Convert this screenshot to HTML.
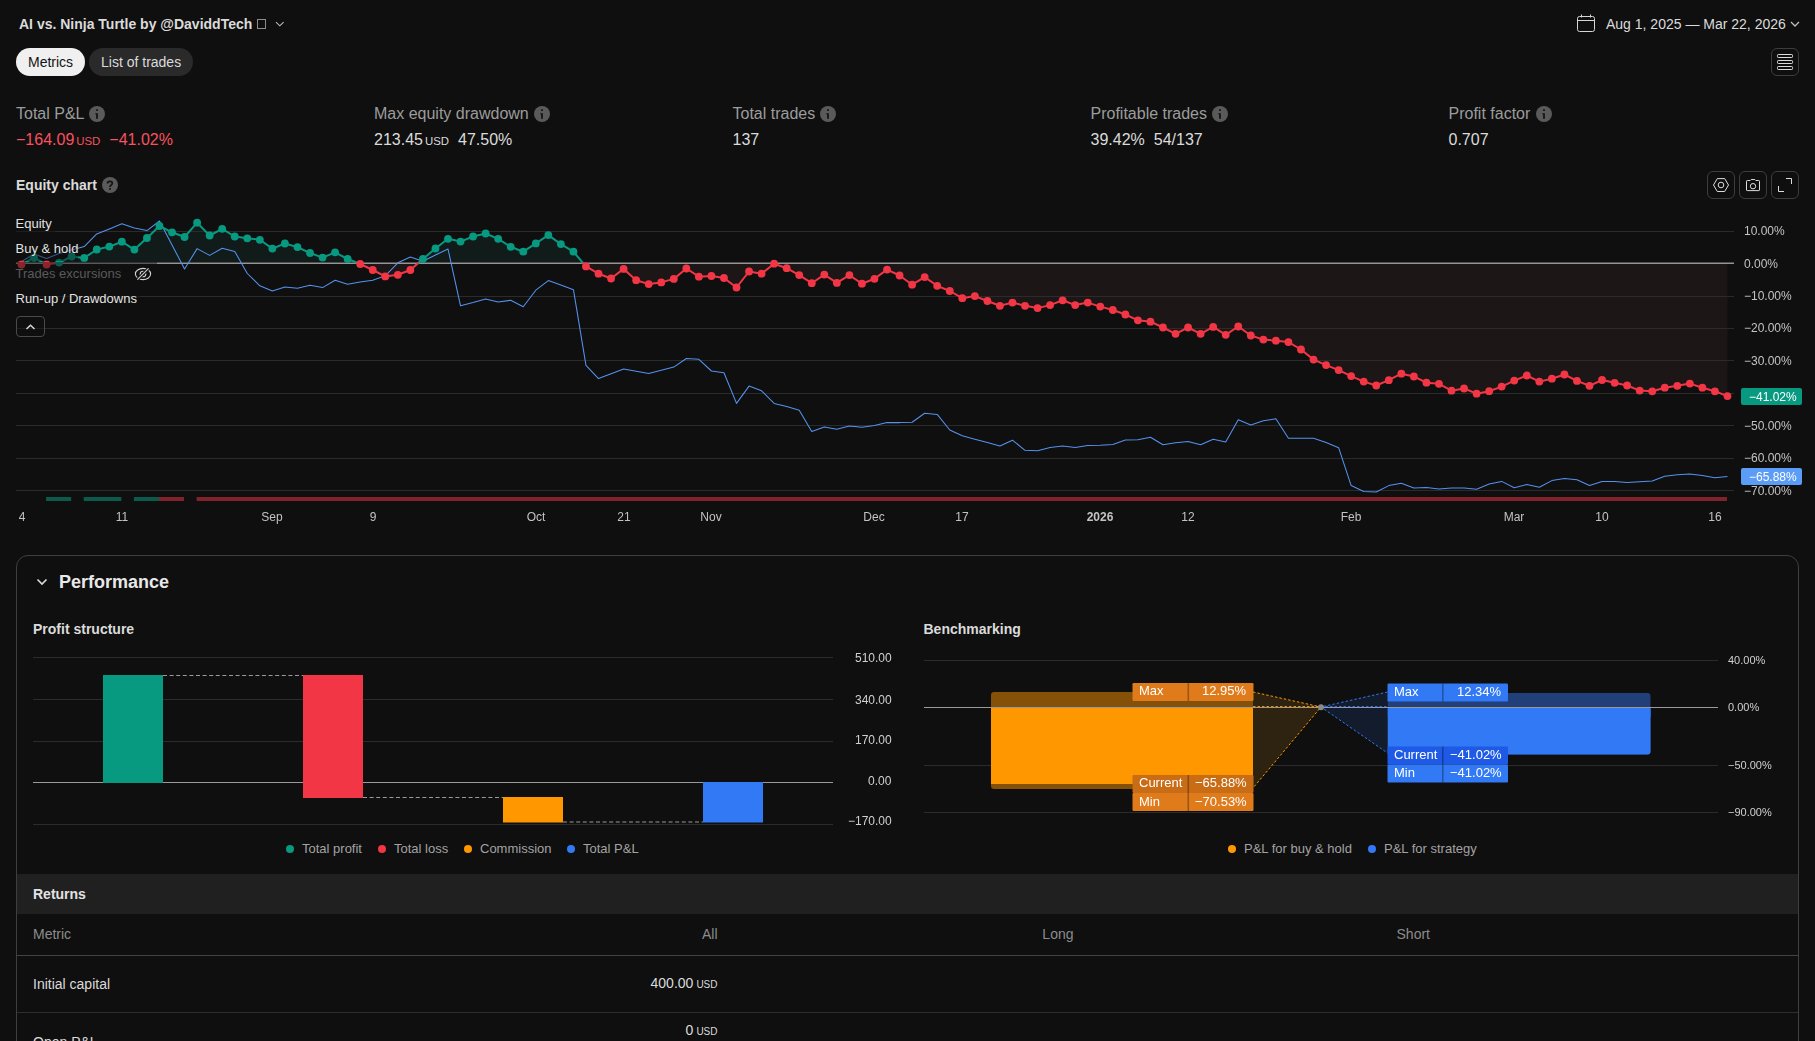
<!DOCTYPE html>
<html><head><meta charset="utf-8"><title>Strategy report</title>
<style>
html,body{margin:0;padding:0;background:#0f0f0f;}
body{width:1815px;height:1041px;overflow:hidden;position:relative;font-family:"Liberation Sans", sans-serif;}
.t{position:absolute;white-space:nowrap;line-height:1;}
svg{display:block}
</style></head><body>
<div class="t" style="left:19px;top:17.15px;font-size:14px;color:#dbdbdb;font-weight:700;">AI vs. Ninja Turtle by @DaviddTech</div>
<div style="position:absolute;left:257px;top:19px;width:9px;height:10px;box-sizing:border-box;border:1px solid #8c8c8c;"></div>
<svg style="position:absolute;left:273px;top:19px" width="13" height="10" viewBox="0 0 13 10"><path d="M3 3.2 L6.8 6.8 L10.6 3.2" fill="none" stroke="#bdbdbd" stroke-width="1.1"/></svg>
<svg style="position:absolute;left:1575px;top:13px" width="22" height="20" viewBox="0 0 22 20"><rect x="2.5" y="3.5" width="17" height="15" rx="2" fill="none" stroke="#d6d6d6" stroke-width="1"/><path d="M2.5 7.5 H19.5" stroke="#d6d6d6" stroke-width="1"/><path d="M6.5 1.5 V4.5 M15.5 1.5 V4.5" stroke="#d6d6d6" stroke-width="1"/></svg>
<div class="t" style="left:1606px;top:17.15px;font-size:14px;color:#dbdbdb;">Aug 1, 2025 — Mar 22, 2026</div>
<svg style="position:absolute;left:1789px;top:19px" width="12" height="10" viewBox="0 0 12 10"><path d="M2 3 L6 7 L10 3" fill="none" stroke="#bdbdbd" stroke-width="1.3"/></svg>
<div style="position:absolute;left:16px;top:48px;width:69px;height:28px;background:#f0f0f0;border-radius:14px;"></div>
<div class="t" style="left:28px;top:55.15px;font-size:14px;color:#131313;">Metrics</div>
<div style="position:absolute;left:89px;top:48px;width:104px;height:28px;background:#2a2a2a;border-radius:14px;"></div>
<div class="t" style="left:101px;top:55.15px;font-size:14px;color:#dbdbdb;">List of trades</div>
<div style="position:absolute;left:1771px;top:48px;width:28px;height:28px;box-sizing:border-box;border:1px solid #3d3d3d;border-radius:6px;"></div>
<svg style="position:absolute;left:1771px;top:48px" width="28" height="28" viewBox="0 0 28 28"><rect x="6.5" y="6.5" width="15" height="3" rx="0.8" fill="none" stroke="#dcdcdc" stroke-width="1"/><rect x="6.5" y="12.5" width="15" height="3" rx="0.8" fill="none" stroke="#dcdcdc" stroke-width="1"/><rect x="6.5" y="18.5" width="15" height="3" rx="0.8" fill="none" stroke="#dcdcdc" stroke-width="1"/></svg>
<div class="t" style="left:16px;top:106.46px;font-size:16px;color:#9c9c9c;">Total P&amp;L</div>
<div class="t" style="left:374px;top:106.46px;font-size:16px;color:#9c9c9c;">Max equity drawdown</div>
<div class="t" style="left:732.5px;top:106.46px;font-size:16px;color:#9c9c9c;">Total trades</div>
<div class="t" style="left:1090.5px;top:106.46px;font-size:16px;color:#9c9c9c;">Profitable trades</div>
<div class="t" style="left:1448.5px;top:106.46px;font-size:16px;color:#9c9c9c;">Profit factor</div>
<div class="t" style="left:16px;top:131.5px;font-size:16px;color:#f7525f">−164.09<span style="font-size:11.4px;margin-left:2px">USD</span><span style="margin-left:9px">−41.02%</span></div>
<div class="t" style="left:374px;top:131.5px;font-size:16px;color:#dbdbdb">213.45<span style="font-size:11.4px;margin-left:2px">USD</span><span style="margin-left:9px">47.50%</span></div>
<div class="t" style="left:732.5px;top:131.5px;font-size:16px;color:#dbdbdb">137</div>
<div class="t" style="left:1090.5px;top:131.5px;font-size:16px;color:#dbdbdb">39.42%<span style="margin-left:9px">54/137</span></div>
<div class="t" style="left:1448.5px;top:131.5px;font-size:16px;color:#dbdbdb">0.707</div>
<svg style="position:absolute;left:89px;top:106px" width="16" height="16" viewBox="0 0 16 16"><circle cx="8" cy="8" r="8" fill="#5a5a5a"/><path d="M6.2 7.2 H8.9 V12.8 H7.1 V8.3 H6.2 Z" fill="#131313"/><rect x="7.1" y="3.3" width="1.8" height="1.7" fill="#131313"/></svg>
<svg style="position:absolute;left:534px;top:106px" width="16" height="16" viewBox="0 0 16 16"><circle cx="8" cy="8" r="8" fill="#5a5a5a"/><path d="M6.2 7.2 H8.9 V12.8 H7.1 V8.3 H6.2 Z" fill="#131313"/><rect x="7.1" y="3.3" width="1.8" height="1.7" fill="#131313"/></svg>
<svg style="position:absolute;left:820px;top:106px" width="16" height="16" viewBox="0 0 16 16"><circle cx="8" cy="8" r="8" fill="#5a5a5a"/><path d="M6.2 7.2 H8.9 V12.8 H7.1 V8.3 H6.2 Z" fill="#131313"/><rect x="7.1" y="3.3" width="1.8" height="1.7" fill="#131313"/></svg>
<svg style="position:absolute;left:1212px;top:106px" width="16" height="16" viewBox="0 0 16 16"><circle cx="8" cy="8" r="8" fill="#5a5a5a"/><path d="M6.2 7.2 H8.9 V12.8 H7.1 V8.3 H6.2 Z" fill="#131313"/><rect x="7.1" y="3.3" width="1.8" height="1.7" fill="#131313"/></svg>
<svg style="position:absolute;left:1536px;top:106px" width="16" height="16" viewBox="0 0 16 16"><circle cx="8" cy="8" r="8" fill="#5a5a5a"/><path d="M6.2 7.2 H8.9 V12.8 H7.1 V8.3 H6.2 Z" fill="#131313"/><rect x="7.1" y="3.3" width="1.8" height="1.7" fill="#131313"/></svg>
<div class="t" style="left:16px;top:178.15px;font-size:14px;color:#dbdbdb;font-weight:700;">Equity chart</div>
<svg style="position:absolute;left:102px;top:177px" width="16" height="16" viewBox="0 0 16 16"><circle cx="8" cy="8" r="8" fill="#5a5a5a"/><path d="M5.5 6.6 C5.5 5 6.6 4.4 8 4.4 C9.5 4.4 10.3 5.3 10.3 6.3 C10.3 7.5 9.2 8 8.6 8.6 C8.2 9 8 9.4 8 9.9" fill="none" stroke="#131313" stroke-width="1.7"/><rect x="7.1" y="11.1" width="1.8" height="1.7" fill="#131313"/></svg>
<div style="position:absolute;left:1707px;top:171px;width:28px;height:28px;box-sizing:border-box;border:1px solid #3d3d3d;border-radius:6px;"></div>
<div style="position:absolute;left:1739px;top:171px;width:28px;height:28px;box-sizing:border-box;border:1px solid #3d3d3d;border-radius:6px;"></div>
<div style="position:absolute;left:1771px;top:171px;width:28px;height:28px;box-sizing:border-box;border:1px solid #3d3d3d;border-radius:6px;"></div>
<svg style="position:absolute;left:1707px;top:171px" width="28" height="28" viewBox="0 0 28 28"><path d="M10.3 7.6 H17.7 L21.5 14 L17.7 20.5 H10.3 L6.5 14 Z" fill="none" stroke="#dcdcdc" stroke-width="1"/><circle cx="14" cy="14" r="2.8" fill="none" stroke="#dcdcdc" stroke-width="1"/></svg>
<svg style="position:absolute;left:1739px;top:171px" width="28" height="28" viewBox="0 0 28 28"><path d="M7.5 10.2 Q7.5 9.5 8.3 9.5 H11.2 L12.2 8.5 H15.8 L16.8 9.5 H19.7 Q20.5 9.5 20.5 10.2 V19 Q20.5 19.6 19.8 19.6 H8.2 Q7.5 19.6 7.5 19 Z" fill="none" stroke="#dcdcdc" stroke-width="1"/><circle cx="14" cy="15.2" r="2.7" fill="none" stroke="#dcdcdc" stroke-width="1"/></svg>
<svg style="position:absolute;left:1771px;top:171px" width="28" height="28" viewBox="0 0 28 28"><path d="M15 7.5 H20.5 V13 M7.5 15 V20.5 H13" fill="none" stroke="#dcdcdc" stroke-width="1"/></svg>
<svg style="position:absolute;left:0;top:0" width="1815" height="540" viewBox="0 0 1815 540"><clipPath id="cabove"><rect x="0" y="0" width="1815" height="263.30"/></clipPath><clipPath id="cbelow"><rect x="0" y="263.30" width="1815" height="400"/></clipPath><path d="M21.50 263.30 L21.50 264.50 L34.04 257.60 L46.59 264.50 L59.13 262.60 L71.68 256.50 L84.22 257.90 L96.76 249.50 L109.31 246.60 L121.85 241.70 L134.40 249.60 L146.94 238.00 L159.48 226.00 L172.03 232.30 L184.57 237.00 L197.12 222.70 L209.66 235.50 L222.20 228.80 L234.75 236.50 L247.29 238.30 L259.84 239.80 L272.38 248.60 L284.92 243.50 L297.47 247.10 L310.01 253.00 L322.56 257.60 L335.10 252.30 L347.64 259.00 L360.19 264.00 L372.73 270.00 L385.28 276.40 L397.82 274.80 L410.36 270.00 L422.91 259.00 L435.45 248.50 L448.00 238.80 L460.54 241.60 L473.08 236.50 L485.63 233.50 L498.17 238.80 L510.72 246.80 L523.26 251.70 L535.80 243.40 L548.35 235.10 L560.89 244.10 L573.44 251.70 L585.98 266.40 L598.52 273.70 L611.07 278.50 L623.61 268.90 L636.16 280.20 L648.70 284.10 L661.24 282.40 L673.79 278.90 L686.33 268.50 L698.88 276.70 L711.42 276.00 L723.96 278.00 L736.51 287.50 L749.05 271.50 L761.60 273.70 L774.14 263.70 L786.68 268.20 L799.23 275.10 L811.77 283.20 L824.32 274.60 L836.86 282.90 L849.40 275.10 L861.95 283.70 L874.49 278.80 L887.04 269.60 L899.58 275.50 L912.12 284.70 L924.67 277.10 L937.21 285.80 L949.76 291.00 L962.30 298.20 L974.84 296.10 L987.39 301.00 L999.93 305.80 L1012.48 302.60 L1025.02 305.80 L1037.56 308.10 L1050.11 305.10 L1062.65 300.30 L1075.20 305.10 L1087.74 302.60 L1100.28 306.60 L1112.83 310.00 L1125.37 314.50 L1137.92 320.30 L1150.46 321.70 L1163.00 327.50 L1175.55 333.80 L1188.09 327.50 L1200.64 333.80 L1213.18 326.90 L1225.72 334.80 L1238.27 326.50 L1250.81 335.50 L1263.36 339.60 L1275.90 340.70 L1288.44 342.10 L1300.99 349.50 L1313.53 359.60 L1326.08 365.10 L1338.62 370.10 L1351.16 376.10 L1363.71 381.60 L1376.25 385.50 L1388.80 380.20 L1401.34 373.70 L1413.88 376.50 L1426.43 382.70 L1438.97 383.80 L1451.52 390.70 L1464.06 388.50 L1476.60 393.70 L1489.15 391.20 L1501.69 386.60 L1514.24 380.60 L1526.78 375.50 L1539.32 381.60 L1551.87 378.70 L1564.41 374.50 L1576.96 380.90 L1589.50 385.80 L1602.04 380.00 L1614.59 382.80 L1627.13 385.50 L1639.68 390.60 L1652.22 391.30 L1664.76 387.70 L1677.31 385.80 L1689.85 383.60 L1702.40 387.70 L1714.94 391.30 L1727.48 396.10 L1727.48 263.30 Z" fill="#101b1a" clip-path="url(#cabove)"/><path d="M21.50 263.30 L21.50 264.50 L34.04 257.60 L46.59 264.50 L59.13 262.60 L71.68 256.50 L84.22 257.90 L96.76 249.50 L109.31 246.60 L121.85 241.70 L134.40 249.60 L146.94 238.00 L159.48 226.00 L172.03 232.30 L184.57 237.00 L197.12 222.70 L209.66 235.50 L222.20 228.80 L234.75 236.50 L247.29 238.30 L259.84 239.80 L272.38 248.60 L284.92 243.50 L297.47 247.10 L310.01 253.00 L322.56 257.60 L335.10 252.30 L347.64 259.00 L360.19 264.00 L372.73 270.00 L385.28 276.40 L397.82 274.80 L410.36 270.00 L422.91 259.00 L435.45 248.50 L448.00 238.80 L460.54 241.60 L473.08 236.50 L485.63 233.50 L498.17 238.80 L510.72 246.80 L523.26 251.70 L535.80 243.40 L548.35 235.10 L560.89 244.10 L573.44 251.70 L585.98 266.40 L598.52 273.70 L611.07 278.50 L623.61 268.90 L636.16 280.20 L648.70 284.10 L661.24 282.40 L673.79 278.90 L686.33 268.50 L698.88 276.70 L711.42 276.00 L723.96 278.00 L736.51 287.50 L749.05 271.50 L761.60 273.70 L774.14 263.70 L786.68 268.20 L799.23 275.10 L811.77 283.20 L824.32 274.60 L836.86 282.90 L849.40 275.10 L861.95 283.70 L874.49 278.80 L887.04 269.60 L899.58 275.50 L912.12 284.70 L924.67 277.10 L937.21 285.80 L949.76 291.00 L962.30 298.20 L974.84 296.10 L987.39 301.00 L999.93 305.80 L1012.48 302.60 L1025.02 305.80 L1037.56 308.10 L1050.11 305.10 L1062.65 300.30 L1075.20 305.10 L1087.74 302.60 L1100.28 306.60 L1112.83 310.00 L1125.37 314.50 L1137.92 320.30 L1150.46 321.70 L1163.00 327.50 L1175.55 333.80 L1188.09 327.50 L1200.64 333.80 L1213.18 326.90 L1225.72 334.80 L1238.27 326.50 L1250.81 335.50 L1263.36 339.60 L1275.90 340.70 L1288.44 342.10 L1300.99 349.50 L1313.53 359.60 L1326.08 365.10 L1338.62 370.10 L1351.16 376.10 L1363.71 381.60 L1376.25 385.50 L1388.80 380.20 L1401.34 373.70 L1413.88 376.50 L1426.43 382.70 L1438.97 383.80 L1451.52 390.70 L1464.06 388.50 L1476.60 393.70 L1489.15 391.20 L1501.69 386.60 L1514.24 380.60 L1526.78 375.50 L1539.32 381.60 L1551.87 378.70 L1564.41 374.50 L1576.96 380.90 L1589.50 385.80 L1602.04 380.00 L1614.59 382.80 L1627.13 385.50 L1639.68 390.60 L1652.22 391.30 L1664.76 387.70 L1677.31 385.80 L1689.85 383.60 L1702.40 387.70 L1714.94 391.30 L1727.48 396.10 L1727.48 263.30 Z" fill="#1d1617" clip-path="url(#cbelow)"/><rect x="16" y="231" width="1718" height="1" fill="#2b2b2b"/><rect x="16" y="296" width="1718" height="1" fill="#2b2b2b"/><rect x="16" y="328" width="1718" height="1" fill="#2b2b2b"/><rect x="16" y="360" width="1718" height="1" fill="#2b2b2b"/><rect x="16" y="393" width="1718" height="1" fill="#2b2b2b"/><rect x="16" y="425" width="1718" height="1" fill="#2b2b2b"/><rect x="16" y="458" width="1718" height="1" fill="#2b2b2b"/><rect x="16" y="490" width="1718" height="1" fill="#2b2b2b"/><rect x="16" y="262" width="1718" height="1" fill="#505050"/><rect x="16" y="263" width="1718" height="1" fill="#959595"/><rect x="46.09" y="497" width="25.09" height="4" fill="#0c5a4b"/><rect x="83.72" y="497" width="37.63" height="4" fill="#0c5a4b"/><rect x="133.90" y="497" width="25.09" height="4" fill="#0c5a4b"/><rect x="158.98" y="497" width="25.09" height="4" fill="#80232b"/><rect x="196.62" y="497" width="1530.37" height="4" fill="#80232b"/><path d="M21.50 261.50 L34.04 254.10 L46.59 258.50 L59.13 253.50 L71.68 250.00 L84.22 246.60 L96.76 233.90 L109.31 229.00 L121.85 223.80 L134.40 228.00 L146.94 230.60 L159.48 221.00 L172.03 245.00 L184.57 269.00 L197.12 248.60 L209.66 255.40 L222.20 248.30 L234.75 251.40 L247.29 273.50 L259.84 285.80 L272.38 291.00 L284.92 287.00 L297.47 288.30 L310.01 285.30 L322.56 287.60 L335.10 280.20 L347.64 284.20 L360.19 282.00 L372.73 280.20 L385.28 275.80 L397.82 262.80 L410.36 257.00 L422.91 261.20 L435.45 255.00 L448.00 249.00 L460.54 305.80 L473.08 302.60 L485.63 298.90 L498.17 301.90 L510.72 300.30 L523.26 306.70 L535.80 290.20 L548.35 280.60 L560.89 285.10 L573.44 289.70 L585.98 365.30 L598.52 378.60 L611.07 373.80 L623.61 369.00 L636.16 371.20 L648.70 373.40 L661.24 370.20 L673.79 367.10 L686.33 358.50 L698.88 359.30 L711.42 371.00 L723.96 372.80 L736.51 403.40 L749.05 386.10 L761.60 390.80 L774.14 403.40 L786.68 406.40 L799.23 410.20 L811.77 431.60 L824.32 426.90 L836.86 429.20 L849.40 426.00 L861.95 427.30 L874.49 425.60 L887.04 422.60 L899.58 422.60 L912.12 422.30 L924.67 413.30 L937.21 414.40 L949.76 430.00 L962.30 435.80 L974.84 439.20 L987.39 442.40 L999.93 446.10 L1012.48 440.20 L1025.02 450.30 L1037.56 450.70 L1050.11 447.50 L1062.65 446.10 L1075.20 447.50 L1087.74 445.50 L1100.28 445.20 L1112.83 444.40 L1125.37 439.90 L1137.92 439.70 L1150.46 437.20 L1163.00 444.80 L1175.55 442.70 L1188.09 441.60 L1200.64 444.80 L1213.18 439.30 L1225.72 442.00 L1238.27 419.70 L1250.81 425.00 L1263.36 420.80 L1275.90 418.80 L1288.44 438.30 L1300.99 438.30 L1313.53 438.30 L1326.08 442.50 L1338.62 447.70 L1351.16 485.60 L1363.71 491.50 L1376.25 492.00 L1388.80 485.60 L1401.34 483.20 L1413.88 487.90 L1426.43 487.60 L1438.97 489.00 L1451.52 487.90 L1464.06 488.00 L1476.60 489.30 L1489.15 484.10 L1501.69 481.40 L1514.24 487.80 L1526.78 484.60 L1539.32 487.30 L1551.87 480.60 L1564.41 478.60 L1576.96 479.80 L1589.50 485.40 L1602.04 481.40 L1614.59 481.40 L1627.13 482.50 L1639.68 481.70 L1652.22 480.90 L1664.76 476.30 L1677.31 474.70 L1689.85 473.90 L1702.40 475.50 L1714.94 477.70 L1727.48 476.60" fill="none" stroke="#5592ee" stroke-width="1.05" stroke-linejoin="round"/><path d="M23.68 263.30 L34.04 257.60 M34.04 257.60 L44.41 263.30 M54.51 263.30 L59.13 262.60 M59.13 262.60 L71.68 256.50 M71.68 256.50 L84.22 257.90 M84.22 257.90 L96.76 249.50 M96.76 249.50 L109.31 246.60 M109.31 246.60 L121.85 241.70 M121.85 241.70 L134.40 249.60 M134.40 249.60 L146.94 238.00 M146.94 238.00 L159.48 226.00 M159.48 226.00 L172.03 232.30 M172.03 232.30 L184.57 237.00 M184.57 237.00 L197.12 222.70 M197.12 222.70 L209.66 235.50 M209.66 235.50 L222.20 228.80 M222.20 228.80 L234.75 236.50 M234.75 236.50 L247.29 238.30 M247.29 238.30 L259.84 239.80 M259.84 239.80 L272.38 248.60 M272.38 248.60 L284.92 243.50 M284.92 243.50 L297.47 247.10 M297.47 247.10 L310.01 253.00 M310.01 253.00 L322.56 257.60 M322.56 257.60 L335.10 252.30 M335.10 252.30 L347.64 259.00 M347.64 259.00 L358.43 263.30 M418.00 263.30 L422.91 259.00 M422.91 259.00 L435.45 248.50 M435.45 248.50 L448.00 238.80 M448.00 238.80 L460.54 241.60 M460.54 241.60 L473.08 236.50 M473.08 236.50 L485.63 233.50 M485.63 233.50 L498.17 238.80 M498.17 238.80 L510.72 246.80 M510.72 246.80 L523.26 251.70 M523.26 251.70 L535.80 243.40 M535.80 243.40 L548.35 235.10 M548.35 235.10 L560.89 244.10 M560.89 244.10 L573.44 251.70 M573.44 251.70 L583.33 263.30" fill="none" stroke="#089981" stroke-width="2" stroke-linecap="round"/><path d="M21.50 264.50 L23.68 263.30 M44.41 263.30 L46.59 264.50 M46.59 264.50 L54.51 263.30 M358.43 263.30 L360.19 264.00 M360.19 264.00 L372.73 270.00 M372.73 270.00 L385.28 276.40 M385.28 276.40 L397.82 274.80 M397.82 274.80 L410.36 270.00 M410.36 270.00 L418.00 263.30 M583.33 263.30 L585.98 266.40 M585.98 266.40 L598.52 273.70 M598.52 273.70 L611.07 278.50 M611.07 278.50 L623.61 268.90 M623.61 268.90 L636.16 280.20 M636.16 280.20 L648.70 284.10 M648.70 284.10 L661.24 282.40 M661.24 282.40 L673.79 278.90 M673.79 278.90 L686.33 268.50 M686.33 268.50 L698.88 276.70 M698.88 276.70 L711.42 276.00 M711.42 276.00 L723.96 278.00 M723.96 278.00 L736.51 287.50 M736.51 287.50 L749.05 271.50 M749.05 271.50 L761.60 273.70 M761.60 273.70 L774.14 263.70 M774.14 263.70 L786.68 268.20 M786.68 268.20 L799.23 275.10 M799.23 275.10 L811.77 283.20 M811.77 283.20 L824.32 274.60 M824.32 274.60 L836.86 282.90 M836.86 282.90 L849.40 275.10 M849.40 275.10 L861.95 283.70 M861.95 283.70 L874.49 278.80 M874.49 278.80 L887.04 269.60 M887.04 269.60 L899.58 275.50 M899.58 275.50 L912.12 284.70 M912.12 284.70 L924.67 277.10 M924.67 277.10 L937.21 285.80 M937.21 285.80 L949.76 291.00 M949.76 291.00 L962.30 298.20 M962.30 298.20 L974.84 296.10 M974.84 296.10 L987.39 301.00 M987.39 301.00 L999.93 305.80 M999.93 305.80 L1012.48 302.60 M1012.48 302.60 L1025.02 305.80 M1025.02 305.80 L1037.56 308.10 M1037.56 308.10 L1050.11 305.10 M1050.11 305.10 L1062.65 300.30 M1062.65 300.30 L1075.20 305.10 M1075.20 305.10 L1087.74 302.60 M1087.74 302.60 L1100.28 306.60 M1100.28 306.60 L1112.83 310.00 M1112.83 310.00 L1125.37 314.50 M1125.37 314.50 L1137.92 320.30 M1137.92 320.30 L1150.46 321.70 M1150.46 321.70 L1163.00 327.50 M1163.00 327.50 L1175.55 333.80 M1175.55 333.80 L1188.09 327.50 M1188.09 327.50 L1200.64 333.80 M1200.64 333.80 L1213.18 326.90 M1213.18 326.90 L1225.72 334.80 M1225.72 334.80 L1238.27 326.50 M1238.27 326.50 L1250.81 335.50 M1250.81 335.50 L1263.36 339.60 M1263.36 339.60 L1275.90 340.70 M1275.90 340.70 L1288.44 342.10 M1288.44 342.10 L1300.99 349.50 M1300.99 349.50 L1313.53 359.60 M1313.53 359.60 L1326.08 365.10 M1326.08 365.10 L1338.62 370.10 M1338.62 370.10 L1351.16 376.10 M1351.16 376.10 L1363.71 381.60 M1363.71 381.60 L1376.25 385.50 M1376.25 385.50 L1388.80 380.20 M1388.80 380.20 L1401.34 373.70 M1401.34 373.70 L1413.88 376.50 M1413.88 376.50 L1426.43 382.70 M1426.43 382.70 L1438.97 383.80 M1438.97 383.80 L1451.52 390.70 M1451.52 390.70 L1464.06 388.50 M1464.06 388.50 L1476.60 393.70 M1476.60 393.70 L1489.15 391.20 M1489.15 391.20 L1501.69 386.60 M1501.69 386.60 L1514.24 380.60 M1514.24 380.60 L1526.78 375.50 M1526.78 375.50 L1539.32 381.60 M1539.32 381.60 L1551.87 378.70 M1551.87 378.70 L1564.41 374.50 M1564.41 374.50 L1576.96 380.90 M1576.96 380.90 L1589.50 385.80 M1589.50 385.80 L1602.04 380.00 M1602.04 380.00 L1614.59 382.80 M1614.59 382.80 L1627.13 385.50 M1627.13 385.50 L1639.68 390.60 M1639.68 390.60 L1652.22 391.30 M1652.22 391.30 L1664.76 387.70 M1664.76 387.70 L1677.31 385.80 M1677.31 385.80 L1689.85 383.60 M1689.85 383.60 L1702.40 387.70 M1702.40 387.70 L1714.94 391.30 M1714.94 391.30 L1727.48 396.10" fill="none" stroke="#f23645" stroke-width="2" stroke-linecap="round"/><circle cx="21.50" cy="264.50" r="3.9" fill="#f23645"/><circle cx="34.04" cy="257.60" r="3.9" fill="#089981"/><circle cx="46.59" cy="264.50" r="3.9" fill="#f23645"/><circle cx="59.13" cy="262.60" r="3.9" fill="#089981"/><circle cx="71.68" cy="256.50" r="3.9" fill="#089981"/><circle cx="84.22" cy="257.90" r="3.9" fill="#089981"/><circle cx="96.76" cy="249.50" r="3.9" fill="#089981"/><circle cx="109.31" cy="246.60" r="3.9" fill="#089981"/><circle cx="121.85" cy="241.70" r="3.9" fill="#089981"/><circle cx="134.40" cy="249.60" r="3.9" fill="#089981"/><circle cx="146.94" cy="238.00" r="3.9" fill="#089981"/><circle cx="159.48" cy="226.00" r="3.9" fill="#089981"/><circle cx="172.03" cy="232.30" r="3.9" fill="#089981"/><circle cx="184.57" cy="237.00" r="3.9" fill="#089981"/><circle cx="197.12" cy="222.70" r="3.9" fill="#089981"/><circle cx="209.66" cy="235.50" r="3.9" fill="#089981"/><circle cx="222.20" cy="228.80" r="3.9" fill="#089981"/><circle cx="234.75" cy="236.50" r="3.9" fill="#089981"/><circle cx="247.29" cy="238.30" r="3.9" fill="#089981"/><circle cx="259.84" cy="239.80" r="3.9" fill="#089981"/><circle cx="272.38" cy="248.60" r="3.9" fill="#089981"/><circle cx="284.92" cy="243.50" r="3.9" fill="#089981"/><circle cx="297.47" cy="247.10" r="3.9" fill="#089981"/><circle cx="310.01" cy="253.00" r="3.9" fill="#089981"/><circle cx="322.56" cy="257.60" r="3.9" fill="#089981"/><circle cx="335.10" cy="252.30" r="3.9" fill="#089981"/><circle cx="347.64" cy="259.00" r="3.9" fill="#089981"/><circle cx="360.19" cy="264.00" r="3.9" fill="#f23645"/><circle cx="372.73" cy="270.00" r="3.9" fill="#f23645"/><circle cx="385.28" cy="276.40" r="3.9" fill="#f23645"/><circle cx="397.82" cy="274.80" r="3.9" fill="#f23645"/><circle cx="410.36" cy="270.00" r="3.9" fill="#f23645"/><circle cx="422.91" cy="259.00" r="3.9" fill="#089981"/><circle cx="435.45" cy="248.50" r="3.9" fill="#089981"/><circle cx="448.00" cy="238.80" r="3.9" fill="#089981"/><circle cx="460.54" cy="241.60" r="3.9" fill="#089981"/><circle cx="473.08" cy="236.50" r="3.9" fill="#089981"/><circle cx="485.63" cy="233.50" r="3.9" fill="#089981"/><circle cx="498.17" cy="238.80" r="3.9" fill="#089981"/><circle cx="510.72" cy="246.80" r="3.9" fill="#089981"/><circle cx="523.26" cy="251.70" r="3.9" fill="#089981"/><circle cx="535.80" cy="243.40" r="3.9" fill="#089981"/><circle cx="548.35" cy="235.10" r="3.9" fill="#089981"/><circle cx="560.89" cy="244.10" r="3.9" fill="#089981"/><circle cx="573.44" cy="251.70" r="3.9" fill="#089981"/><circle cx="585.98" cy="266.40" r="3.9" fill="#f23645"/><circle cx="598.52" cy="273.70" r="3.9" fill="#f23645"/><circle cx="611.07" cy="278.50" r="3.9" fill="#f23645"/><circle cx="623.61" cy="268.90" r="3.9" fill="#f23645"/><circle cx="636.16" cy="280.20" r="3.9" fill="#f23645"/><circle cx="648.70" cy="284.10" r="3.9" fill="#f23645"/><circle cx="661.24" cy="282.40" r="3.9" fill="#f23645"/><circle cx="673.79" cy="278.90" r="3.9" fill="#f23645"/><circle cx="686.33" cy="268.50" r="3.9" fill="#f23645"/><circle cx="698.88" cy="276.70" r="3.9" fill="#f23645"/><circle cx="711.42" cy="276.00" r="3.9" fill="#f23645"/><circle cx="723.96" cy="278.00" r="3.9" fill="#f23645"/><circle cx="736.51" cy="287.50" r="3.9" fill="#f23645"/><circle cx="749.05" cy="271.50" r="3.9" fill="#f23645"/><circle cx="761.60" cy="273.70" r="3.9" fill="#f23645"/><circle cx="774.14" cy="263.70" r="3.9" fill="#f23645"/><circle cx="786.68" cy="268.20" r="3.9" fill="#f23645"/><circle cx="799.23" cy="275.10" r="3.9" fill="#f23645"/><circle cx="811.77" cy="283.20" r="3.9" fill="#f23645"/><circle cx="824.32" cy="274.60" r="3.9" fill="#f23645"/><circle cx="836.86" cy="282.90" r="3.9" fill="#f23645"/><circle cx="849.40" cy="275.10" r="3.9" fill="#f23645"/><circle cx="861.95" cy="283.70" r="3.9" fill="#f23645"/><circle cx="874.49" cy="278.80" r="3.9" fill="#f23645"/><circle cx="887.04" cy="269.60" r="3.9" fill="#f23645"/><circle cx="899.58" cy="275.50" r="3.9" fill="#f23645"/><circle cx="912.12" cy="284.70" r="3.9" fill="#f23645"/><circle cx="924.67" cy="277.10" r="3.9" fill="#f23645"/><circle cx="937.21" cy="285.80" r="3.9" fill="#f23645"/><circle cx="949.76" cy="291.00" r="3.9" fill="#f23645"/><circle cx="962.30" cy="298.20" r="3.9" fill="#f23645"/><circle cx="974.84" cy="296.10" r="3.9" fill="#f23645"/><circle cx="987.39" cy="301.00" r="3.9" fill="#f23645"/><circle cx="999.93" cy="305.80" r="3.9" fill="#f23645"/><circle cx="1012.48" cy="302.60" r="3.9" fill="#f23645"/><circle cx="1025.02" cy="305.80" r="3.9" fill="#f23645"/><circle cx="1037.56" cy="308.10" r="3.9" fill="#f23645"/><circle cx="1050.11" cy="305.10" r="3.9" fill="#f23645"/><circle cx="1062.65" cy="300.30" r="3.9" fill="#f23645"/><circle cx="1075.20" cy="305.10" r="3.9" fill="#f23645"/><circle cx="1087.74" cy="302.60" r="3.9" fill="#f23645"/><circle cx="1100.28" cy="306.60" r="3.9" fill="#f23645"/><circle cx="1112.83" cy="310.00" r="3.9" fill="#f23645"/><circle cx="1125.37" cy="314.50" r="3.9" fill="#f23645"/><circle cx="1137.92" cy="320.30" r="3.9" fill="#f23645"/><circle cx="1150.46" cy="321.70" r="3.9" fill="#f23645"/><circle cx="1163.00" cy="327.50" r="3.9" fill="#f23645"/><circle cx="1175.55" cy="333.80" r="3.9" fill="#f23645"/><circle cx="1188.09" cy="327.50" r="3.9" fill="#f23645"/><circle cx="1200.64" cy="333.80" r="3.9" fill="#f23645"/><circle cx="1213.18" cy="326.90" r="3.9" fill="#f23645"/><circle cx="1225.72" cy="334.80" r="3.9" fill="#f23645"/><circle cx="1238.27" cy="326.50" r="3.9" fill="#f23645"/><circle cx="1250.81" cy="335.50" r="3.9" fill="#f23645"/><circle cx="1263.36" cy="339.60" r="3.9" fill="#f23645"/><circle cx="1275.90" cy="340.70" r="3.9" fill="#f23645"/><circle cx="1288.44" cy="342.10" r="3.9" fill="#f23645"/><circle cx="1300.99" cy="349.50" r="3.9" fill="#f23645"/><circle cx="1313.53" cy="359.60" r="3.9" fill="#f23645"/><circle cx="1326.08" cy="365.10" r="3.9" fill="#f23645"/><circle cx="1338.62" cy="370.10" r="3.9" fill="#f23645"/><circle cx="1351.16" cy="376.10" r="3.9" fill="#f23645"/><circle cx="1363.71" cy="381.60" r="3.9" fill="#f23645"/><circle cx="1376.25" cy="385.50" r="3.9" fill="#f23645"/><circle cx="1388.80" cy="380.20" r="3.9" fill="#f23645"/><circle cx="1401.34" cy="373.70" r="3.9" fill="#f23645"/><circle cx="1413.88" cy="376.50" r="3.9" fill="#f23645"/><circle cx="1426.43" cy="382.70" r="3.9" fill="#f23645"/><circle cx="1438.97" cy="383.80" r="3.9" fill="#f23645"/><circle cx="1451.52" cy="390.70" r="3.9" fill="#f23645"/><circle cx="1464.06" cy="388.50" r="3.9" fill="#f23645"/><circle cx="1476.60" cy="393.70" r="3.9" fill="#f23645"/><circle cx="1489.15" cy="391.20" r="3.9" fill="#f23645"/><circle cx="1501.69" cy="386.60" r="3.9" fill="#f23645"/><circle cx="1514.24" cy="380.60" r="3.9" fill="#f23645"/><circle cx="1526.78" cy="375.50" r="3.9" fill="#f23645"/><circle cx="1539.32" cy="381.60" r="3.9" fill="#f23645"/><circle cx="1551.87" cy="378.70" r="3.9" fill="#f23645"/><circle cx="1564.41" cy="374.50" r="3.9" fill="#f23645"/><circle cx="1576.96" cy="380.90" r="3.9" fill="#f23645"/><circle cx="1589.50" cy="385.80" r="3.9" fill="#f23645"/><circle cx="1602.04" cy="380.00" r="3.9" fill="#f23645"/><circle cx="1614.59" cy="382.80" r="3.9" fill="#f23645"/><circle cx="1627.13" cy="385.50" r="3.9" fill="#f23645"/><circle cx="1639.68" cy="390.60" r="3.9" fill="#f23645"/><circle cx="1652.22" cy="391.30" r="3.9" fill="#f23645"/><circle cx="1664.76" cy="387.70" r="3.9" fill="#f23645"/><circle cx="1677.31" cy="385.80" r="3.9" fill="#f23645"/><circle cx="1689.85" cy="383.60" r="3.9" fill="#f23645"/><circle cx="1702.40" cy="387.70" r="3.9" fill="#f23645"/><circle cx="1714.94" cy="391.30" r="3.9" fill="#f23645"/><circle cx="1727.48" cy="396.10" r="3.9" fill="#f23645"/></svg>
<div class="t" style="left:1743.8px;top:224.64px;font-size:12px;color:#c3c3c3;will-change:transform;">10.00%</div>
<div class="t" style="left:1743.8px;top:257.64px;font-size:12px;color:#c3c3c3;will-change:transform;">0.00%</div>
<div class="t" style="left:1743.8px;top:289.64px;font-size:12px;color:#c3c3c3;will-change:transform;">−10.00%</div>
<div class="t" style="left:1743.8px;top:321.64px;font-size:12px;color:#c3c3c3;will-change:transform;">−20.00%</div>
<div class="t" style="left:1743.8px;top:354.64px;font-size:12px;color:#c3c3c3;will-change:transform;">−30.00%</div>
<div class="t" style="left:1743.8px;top:419.64px;font-size:12px;color:#c3c3c3;will-change:transform;">−50.00%</div>
<div class="t" style="left:1743.8px;top:451.64px;font-size:12px;color:#c3c3c3;will-change:transform;">−60.00%</div>
<div class="t" style="left:1743.8px;top:484.64px;font-size:12px;color:#c3c3c3;will-change:transform;">−70.00%</div>
<div style="position:absolute;left:1741px;top:388px;width:61px;height:17px;background:#089981;border-radius:2px;"></div>
<div class="t" style="right:18px;top:390.84px;font-size:12px;color:#ffffff;will-change:transform;">−41.02%</div>
<div style="position:absolute;left:1741px;top:468px;width:61px;height:17px;background:#5b9cf6;border-radius:2px;"></div>
<div class="t" style="right:18px;top:470.84px;font-size:12px;color:#ffffff;will-change:transform;">−65.88%</div>
<div class="t" style="left:21.5px;transform:translateX(-50%);top:510.84px;font-size:12px;color:#c3c3c3;will-change:transform;">4</div>
<div class="t" style="left:121.852px;transform:translateX(-50%);top:510.84px;font-size:12px;color:#c3c3c3;will-change:transform;">11</div>
<div class="t" style="left:272.38px;transform:translateX(-50%);top:510.84px;font-size:12px;color:#c3c3c3;will-change:transform;">Sep</div>
<div class="t" style="left:372.732px;transform:translateX(-50%);top:510.84px;font-size:12px;color:#c3c3c3;will-change:transform;">9</div>
<div class="t" style="left:535.804px;transform:translateX(-50%);top:510.84px;font-size:12px;color:#c3c3c3;will-change:transform;">Oct</div>
<div class="t" style="left:623.6120000000001px;transform:translateX(-50%);top:510.84px;font-size:12px;color:#c3c3c3;will-change:transform;">21</div>
<div class="t" style="left:711.4200000000001px;transform:translateX(-50%);top:510.84px;font-size:12px;color:#c3c3c3;will-change:transform;">Nov</div>
<div class="t" style="left:874.4920000000001px;transform:translateX(-50%);top:510.84px;font-size:12px;color:#c3c3c3;will-change:transform;">Dec</div>
<div class="t" style="left:962.3000000000001px;transform:translateX(-50%);top:510.84px;font-size:12px;color:#c3c3c3;will-change:transform;">17</div>
<div class="t" style="left:1100.284px;transform:translateX(-50%);top:510.84px;font-size:12px;color:#c3c3c3;font-weight:700;will-change:transform;">2026</div>
<div class="t" style="left:1188.092px;transform:translateX(-50%);top:510.84px;font-size:12px;color:#c3c3c3;will-change:transform;">12</div>
<div class="t" style="left:1351.164px;transform:translateX(-50%);top:510.84px;font-size:12px;color:#c3c3c3;will-change:transform;">Feb</div>
<div class="t" style="left:1514.236px;transform:translateX(-50%);top:510.84px;font-size:12px;color:#c3c3c3;will-change:transform;">Mar</div>
<div class="t" style="left:1602.044px;transform:translateX(-50%);top:510.84px;font-size:12px;color:#c3c3c3;will-change:transform;">10</div>
<div class="t" style="left:1714.94px;transform:translateX(-50%);top:510.84px;font-size:12px;color:#c3c3c3;will-change:transform;">16</div>
<div style="position:absolute;left:15px;top:212px;width:40px;height:24px;background:rgba(15,15,15,0.45);"></div>
<div style="position:absolute;left:15px;top:237px;width:63px;height:24px;background:rgba(15,15,15,0.45);"></div>
<div style="position:absolute;left:15px;top:262px;width:142px;height:24px;background:rgba(15,15,15,0.45);"></div>
<div style="position:absolute;left:15px;top:287px;width:125px;height:24px;background:rgba(15,15,15,0.45);"></div>
<div class="t" style="left:15.5px;top:217.00px;font-size:13px;color:#e3e3e3;">Equity</div>
<div class="t" style="left:15.5px;top:242.00px;font-size:13px;color:#e3e3e3;">Buy &amp; hold</div>
<div class="t" style="left:15.5px;top:267.00px;font-size:13px;color:#5a5a5a;">Trades excursions</div>
<div class="t" style="left:15.5px;top:292.00px;font-size:13px;color:#e3e3e3;">Run-up / Drawdowns</div>
<svg style="position:absolute;left:134px;top:266px" width="18" height="16" viewBox="0 0 18 16"><defs><mask id="eyem"><rect x="0" y="0" width="18" height="16" fill="#fff"/><path d="M3.4 13.6 L14.6 2.4" stroke="#000" stroke-width="3.2"/></mask></defs><g mask="url(#eyem)"><ellipse cx="9" cy="8" rx="7.6" ry="5.6" fill="none" stroke="#d4d4d4" stroke-width="1.1"/><circle cx="9" cy="8" r="2.8" fill="none" stroke="#d4d4d4" stroke-width="1.1"/></g><path d="M3.4 13.6 L14.6 2.4" stroke="#d4d4d4" stroke-width="1.1"/></svg>
<div style="position:absolute;left:16px;top:316px;width:29px;height:21px;box-sizing:border-box;border:1px solid #4a4a4a;border-radius:4px;background:rgba(15,15,15,0.45);"></div>
<svg style="position:absolute;left:16px;top:316px" width="29" height="21" viewBox="0 0 29 21"><path d="M10.5 13 L14.5 9.2 L18.5 13" fill="none" stroke="#d8d8d8" stroke-width="1.5"/></svg>
<div style="position:absolute;left:16px;top:555px;width:1783px;height:600px;box-sizing:border-box;border:1px solid #3f3f3f;border-radius:12px;"></div>
<svg style="position:absolute;left:34px;top:575px" width="16" height="14" viewBox="0 0 16 14"><path d="M3.5 4.5 L8 9 L12.5 4.5" fill="none" stroke="#dcdcdc" stroke-width="1.6"/></svg>
<div class="t" style="left:59px;top:573.26px;font-size:18px;color:#e8e8e8;font-weight:700;">Performance</div>
<div class="t" style="left:33px;top:622.15px;font-size:14px;color:#dbdbdb;font-weight:700;">Profit structure</div>
<div class="t" style="left:923.5px;top:622.15px;font-size:14px;color:#dbdbdb;font-weight:700;">Benchmarking</div>
<svg style="position:absolute;left:0;top:640px" width="900" height="200" viewBox="0 640 900 200"><rect x="33" y="657" width="800" height="1" fill="#2b2b2b"/><rect x="33" y="699" width="800" height="1" fill="#2b2b2b"/><rect x="33" y="741" width="800" height="1" fill="#2b2b2b"/><rect x="33" y="824" width="800" height="1" fill="#2b2b2b"/><rect x="33" y="782" width="800" height="1" fill="#9a9a9a"/><rect x="103" y="675" width="60" height="108" fill="#089981"/><rect x="303" y="675" width="60" height="123" fill="#f23645"/><rect x="503" y="797" width="60" height="25.5" fill="#ff9800"/><rect x="703" y="782" width="60" height="40.5" fill="#3179f5"/><path d="M163 675.5 H303 M363 797.5 H503 M563 822 H703" stroke="#9a9a9a" stroke-width="1" stroke-dasharray="4 2.6"/></svg>
<div class="t" style="right:923.5px;top:652.14px;font-size:12px;color:#d0d0d0;will-change:transform;">510.00</div>
<div class="t" style="right:923.5px;top:693.64px;font-size:12px;color:#d0d0d0;will-change:transform;">340.00</div>
<div class="t" style="right:923.5px;top:734.14px;font-size:12px;color:#d0d0d0;will-change:transform;">170.00</div>
<div class="t" style="right:923.5px;top:774.64px;font-size:12px;color:#d0d0d0;will-change:transform;">0.00</div>
<div class="t" style="right:923.5px;top:814.64px;font-size:12px;color:#d0d0d0;will-change:transform;">−170.00</div>
<div style="position:absolute;left:286px;top:845px;width:8px;height:8px;border-radius:50%;background:#089981"></div>
<div class="t" style="left:302px;top:842.00px;font-size:13px;color:#a3a3a3;">Total profit</div>
<div style="position:absolute;left:378px;top:845px;width:8px;height:8px;border-radius:50%;background:#f23645"></div>
<div class="t" style="left:394px;top:842.00px;font-size:13px;color:#a3a3a3;">Total loss</div>
<div style="position:absolute;left:464px;top:845px;width:8px;height:8px;border-radius:50%;background:#ff9800"></div>
<div class="t" style="left:480px;top:842.00px;font-size:13px;color:#a3a3a3;">Commission</div>
<div style="position:absolute;left:567px;top:845px;width:8px;height:8px;border-radius:50%;background:#3179f5"></div>
<div class="t" style="left:583px;top:842.00px;font-size:13px;color:#a3a3a3;">Total P&amp;L</div>
<div style="position:absolute;left:1228px;top:845px;width:8px;height:8px;border-radius:50%;background:#ff9800"></div>
<div class="t" style="left:1244px;top:842.00px;font-size:13px;color:#a3a3a3;">P&amp;L for buy &amp; hold</div>
<div style="position:absolute;left:1368px;top:845px;width:8px;height:8px;border-radius:50%;background:#3179f5"></div>
<div class="t" style="left:1384px;top:842.00px;font-size:13px;color:#a3a3a3;">P&amp;L for strategy</div>
<svg style="position:absolute;left:900px;top:640px" width="915" height="200" viewBox="900 640 915 200"><rect x="924" y="660" width="794" height="1" fill="#2b2b2b"/><rect x="924" y="765" width="794" height="1" fill="#2b2b2b"/><rect x="924" y="812" width="794" height="1" fill="#2b2b2b"/><rect x="991" y="692" width="262" height="97" rx="3" fill="#855008"/><rect x="991" y="707" width="262" height="77" fill="#ff9800"/><path d="M1253 692 L1321 707 L1253 788 Z" fill="#2e2210"/><rect x="1387.5" y="693" width="263" height="61.5" rx="3" fill="#213f78"/><rect x="1387.5" y="707" width="263" height="47.5" rx="3" fill="#3179f5"/><rect x="1387.5" y="707" width="263" height="10" fill="#3179f5"/><path d="M1387.5 692 L1321 707 L1387.5 753 Z" fill="#131c2c"/><rect x="924" y="707" width="794" height="1" fill="#9a9a9a"/><path d="M1253 692 L1321 707 L1253 788 M1253 706.6 H1321" fill="none" stroke="#ff9800" stroke-width="1" stroke-dasharray="2.5 2"/><path d="M1387.5 692 L1321 707 L1387.5 753 M1321 706.6 H1387.5" fill="none" stroke="#3179f5" stroke-width="1" stroke-dasharray="2.5 2"/><circle cx="1321" cy="707.3" r="3" fill="#8a8a8a"/><rect x="1132.5" y="683" width="121" height="18" rx="1.2" fill="#e07b1c"/><rect x="1187.5" y="683" width="1.6" height="18" fill="rgba(0,0,0,0.3)"/><rect x="1132.5" y="775" width="121" height="18" rx="1.2" fill="#c86c15"/><rect x="1187.5" y="775" width="1.6" height="18" fill="rgba(0,0,0,0.3)"/><rect x="1132.5" y="793" width="121" height="18" rx="1.2" fill="#e07b1c"/><rect x="1187.5" y="793" width="1.6" height="18" fill="rgba(0,0,0,0.3)"/><rect x="1387.5" y="683.5" width="120.5" height="18" rx="1.2" fill="#3179f5"/><rect x="1442.0" y="683.5" width="1.6" height="18" fill="rgba(0,0,0,0.3)"/><rect x="1387.5" y="746.5" width="120.5" height="18" rx="1.2" fill="#1f5ae6"/><rect x="1442.0" y="746.5" width="1.6" height="18" fill="rgba(0,0,0,0.3)"/><rect x="1387.5" y="764.5" width="120.5" height="18" rx="1.2" fill="#3179f5"/><rect x="1442.0" y="764.5" width="1.6" height="18" fill="rgba(0,0,0,0.3)"/></svg>
<div class="t" style="left:1138.5px;top:684.00px;font-size:13px;color:#ffffff;will-change:transform;">Max</div>
<div class="t" style="right:568.5px;top:684.00px;font-size:13px;color:#ffffff;will-change:transform;">12.95%</div>
<div class="t" style="left:1138.5px;top:776.00px;font-size:13px;color:#ffffff;will-change:transform;">Current</div>
<div class="t" style="right:568.5px;top:776.00px;font-size:13px;color:#ffffff;will-change:transform;">−65.88%</div>
<div class="t" style="left:1138.5px;top:794.50px;font-size:13px;color:#ffffff;will-change:transform;">Min</div>
<div class="t" style="right:568.5px;top:794.50px;font-size:13px;color:#ffffff;will-change:transform;">−70.53%</div>
<div class="t" style="left:1393.5px;top:685.00px;font-size:13px;color:#ffffff;will-change:transform;">Max</div>
<div class="t" style="right:313.5px;top:685.00px;font-size:13px;color:#ffffff;will-change:transform;">12.34%</div>
<div class="t" style="left:1393.5px;top:747.50px;font-size:13px;color:#ffffff;will-change:transform;">Current</div>
<div class="t" style="right:313.5px;top:747.50px;font-size:13px;color:#ffffff;will-change:transform;">−41.02%</div>
<div class="t" style="left:1393.5px;top:766.00px;font-size:13px;color:#ffffff;will-change:transform;">Min</div>
<div class="t" style="right:313.5px;top:766.00px;font-size:13px;color:#ffffff;will-change:transform;">−41.02%</div>
<div class="t" style="left:1728px;top:655.49px;font-size:11px;color:#d0d0d0;will-change:transform;">40.00%</div>
<div class="t" style="left:1728px;top:702.49px;font-size:11px;color:#d0d0d0;will-change:transform;">0.00%</div>
<div class="t" style="left:1728px;top:760.49px;font-size:11px;color:#d0d0d0;will-change:transform;">−50.00%</div>
<div class="t" style="left:1728px;top:807.49px;font-size:11px;color:#d0d0d0;will-change:transform;">−90.00%</div>
<div style="position:absolute;left:17px;top:874px;width:1781px;height:40px;background:#202020;"></div>
<div class="t" style="left:33px;top:887.15px;font-size:14px;color:#e3e3e3;font-weight:700;">Returns</div>
<div class="t" style="left:33px;top:927.15px;font-size:14px;color:#8c8c8c;">Metric</div>
<div class="t" style="right:1097.5px;top:927.15px;font-size:14px;color:#8c8c8c;">All</div>
<div class="t" style="right:741.5px;top:927.15px;font-size:14px;color:#8c8c8c;">Long</div>
<div class="t" style="right:385px;top:927.15px;font-size:14px;color:#8c8c8c;">Short</div>
<div style="position:absolute;left:17px;top:955px;width:1781px;height:1px;background:#434343;"></div>
<div class="t" style="left:33px;top:977.15px;font-size:14px;color:#dbdbdb;">Initial capital</div>
<div class="t" style="right:1097.5px;top:975.65px;font-size:14px;color:#dbdbdb">400.00<span style="font-size:10px;margin-left:3px">USD</span></div>
<div style="position:absolute;left:17px;top:1012px;width:1781px;height:1px;background:#2e2e2e;"></div>
<div class="t" style="left:33px;top:1034.65px;font-size:14px;color:#dbdbdb;">Open P&amp;L</div>
<div class="t" style="right:1097.5px;top:1023.15px;font-size:14px;color:#dbdbdb">0<span style="font-size:10px;margin-left:3px">USD</span></div>
</body></html>
